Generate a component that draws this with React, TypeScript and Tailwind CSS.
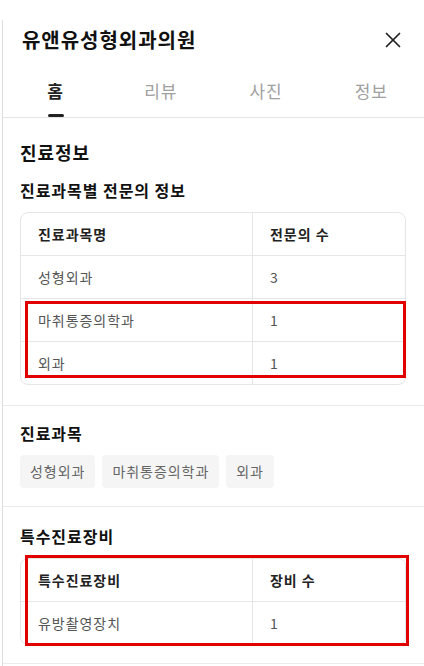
import { X } from 'lucide-react';

const specialists = [
  { name: '성형외과', count: 3 },
  { name: '마취통증의학과', count: 1 },
  { name: '외과', count: 1 },
];

const subjects = ['성형외과', '마취통증의학과', '외과'];

const tabs = ['홈', '리뷰', '사진', '정보'];

function Table({
  head,
  rows,
  children,
}: {
  head: [string, string];
  rows: { name: string; count: number }[];
  children?: React.ReactNode;
}) {
  return (
    <div className="relative">
      <div className="overflow-hidden rounded-lg border border-[#e6e6e6]">
        <div className="grid grid-cols-[232px_1fr] h-[42px] items-stretch text-[14px] font-bold text-[#222]">
          <div className="flex items-center pl-[17px] border-r border-[#e6e6e6]">{head[0]}</div>
          <div className="flex items-center pl-[17px]">{head[1]}</div>
        </div>
        {rows.map((r) => (
          <div
            key={r.name}
            className="grid grid-cols-[232px_1fr] h-[43px] items-stretch border-t border-[#e6e6e6] text-[14px] text-[#555]"
          >
            <div className="flex items-center pl-[17px] border-r border-[#e6e6e6]">{r.name}</div>
            <div className="flex items-center pl-[17px]">{r.count}</div>
          </div>
        ))}
      </div>
      {children}
    </div>
  );
}

export default function App() {
  return (
    <div
      className="w-[424px] h-[666px] overflow-hidden bg-white tracking-[0.06em]"
      style={{ fontFamily: '"Noto Sans CJK KR", "Noto Sans", sans-serif' }}
    >
      <div className="ml-[2px] h-full border-l border-[#dedede]">
        {/* header */}
        <div className="flex items-center justify-between h-[40px] mt-[20px] pl-[19px] pr-[18px]">
          <h1 className="text-[20px] font-bold text-[#111]">유앤유성형외과의원</h1>
          <X className="w-[26px] h-[26px] text-[#222]" strokeWidth={1.6} />
        </div>

        {/* tabs */}
        <div className="grid grid-cols-4 h-[58px] border-b border-[#e4e4e4]">
          {tabs.map((t, i) => (
            <div key={t} className="relative flex items-center justify-center pt-[4px]">
              <span className={i === 0 ? 'text-[17px] font-bold text-[#222]' : 'text-[17px] text-[#a0a0a0]'}>{t}</span>
              {i === 0 && (
                <span className="absolute bottom-0 left-1/2 -translate-x-1/2 w-[16px] h-[3px] rounded-sm bg-[#222]" />
              )}
            </div>
          ))}
        </div>

        {/* 진료정보 */}
        <div className="pl-[17px] pr-[18px] pt-[21px] pb-[20px] border-b border-[#ececec]">
          <h2 className="text-[18px] font-bold text-[#111] leading-[26px]">진료정보</h2>
          <h3 className="mt-[13px] text-[16px] font-bold text-[#111] leading-[24px]">진료과목별 전문의 정보</h3>
          <div className="mt-[10px]">
            <Table head={['진료과목명', '전문의 수']} rows={specialists}>
              <div className="absolute left-[5px] top-[89px] w-[381px] h-[77px] border-[3px] border-[#e00000] pointer-events-none" />
            </Table>
          </div>
        </div>

        {/* 진료과목 */}
        <div className="pl-[17px] pr-[18px] pt-[15px] pb-[18px] border-b border-[#ececec]">
          <h3 className="text-[16px] font-bold text-[#111] leading-[24px]">진료과목</h3>
          <div className="mt-[10px] flex gap-[7px]">
            {subjects.map((s) => (
              <span
                key={s}
                className="h-[33px] flex items-center px-[10px] rounded bg-[#f5f5f5] text-[14px] text-[#666]"
              >
                {s}
              </span>
            ))}
          </div>
        </div>

        {/* 특수진료장비 */}
        <div className="pl-[17px] pr-[18px] pt-[17px] pb-[18px] border-b border-[#ececec]">
          <h3 className="text-[16px] font-bold text-[#111] leading-[24px]">특수진료장비</h3>
          <div className="mt-[10px]">
            <Table head={['특수진료장비', '장비 수']} rows={[{ name: '유방촬영장치', count: 1 }]}>
              <div className="absolute left-[5px] top-[-3px] w-[384px] h-[91px] border-[3px] border-[#e00000] pointer-events-none" />
            </Table>
          </div>
        </div>
      </div>
    </div>
  );
}
